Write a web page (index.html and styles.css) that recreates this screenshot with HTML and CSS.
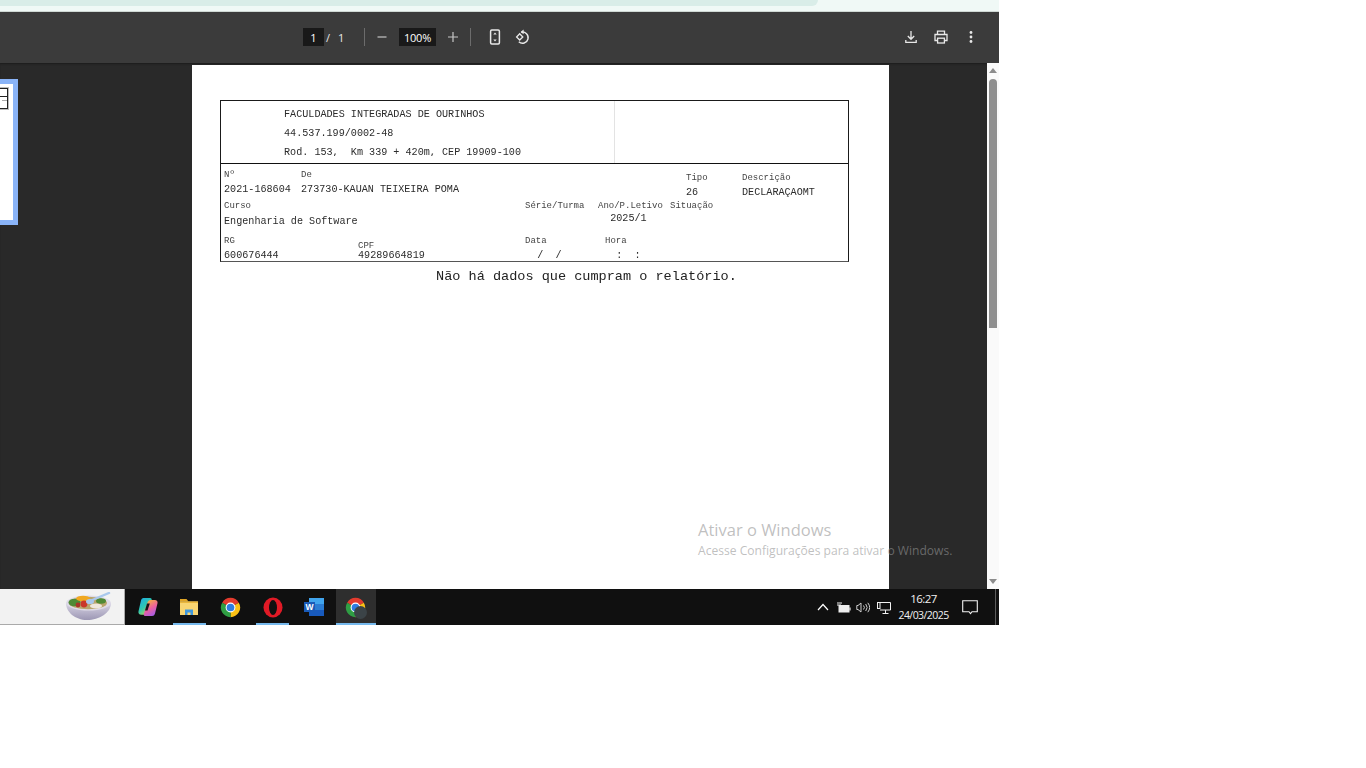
FILE: index.html
```html
<!DOCTYPE html>
<html lang="pt-BR">
<head>
  <meta charset="UTF-8" />
  <title>Relatório</title>
  <link rel="stylesheet" href="styles.css">
</head>
<body>
  <svg class="defs" width="0" height="0">
    <symbol id="chrome" viewBox="0 0 24 24">
      <path d="M12 12L2.47 6.5A11 11 0 0 1 21.53 6.5Z" fill="#e33b2e"/>
      <path d="M12 12L21.53 6.5A11 11 0 0 1 12 23Z" fill="#fbc116"/>
      <path d="M12 12L12 23A11 11 0 0 1 2.47 6.5Z" fill="#2f9e44"/>
      <circle cx="12" cy="12" r="5.6" fill="#fff"/>
      <circle cx="12" cy="12" r="4.4" fill="#2f7de1"/>
    </symbol>
  </svg>

  <div class="screen">
    <div class="top-strip"><div class="top-pill"></div></div>

    <div class="toolbar">
      <div class="page-box">1</div>
      <span class="slash">/</span>
      <span class="total">1</span>
      <span class="divider first"></span>
      <svg class="tool minus" width="12" height="12" viewBox="0 0 12 12"><path d="M1.5 6h9" stroke="#c7c7c7" stroke-width="1.2"/></svg>
      <div class="zoom-box">100%</div>
      <svg class="tool plus" width="12" height="12" viewBox="0 0 12 12"><path d="M1 6h10M6 1v10" stroke="#c7c7c7" stroke-width="1.2"/></svg>
      <span class="divider second"></span>
      <svg class="tool fit" width="14" height="16" viewBox="0 0 14 16" fill="none"><rect x="2.6" y="1" width="8.8" height="14" rx="1.2" stroke="#e8e8e8" stroke-width="1.5"/><path d="M7 3.6l1.7 2H5.3zM7 12.4l1.7-2H5.3z" fill="#e8e8e8"/></svg>
      <svg class="tool rotate" width="16" height="16" viewBox="0 0 16 16" fill="none"><path d="M6.2 3.2a5.6 5.6 0 1 1-2.4 9.6" stroke="#e8e8e8" stroke-width="1.4"/><path d="M8.6 0.6v4.6L5.6 3z" fill="#e8e8e8"/><rect x="2.5" y="5.7" width="4.4" height="4.4" transform="rotate(45 4.7 7.9)" stroke="#e8e8e8" stroke-width="1.3"/></svg>
      <div class="tools-right">
        <svg width="14" height="14" viewBox="0 0 14 14" fill="none"><path d="M7 1v8M3.8 6L7 9.3 10.2 6M1.8 10v2.3h10.400V10" stroke="#e8e8e8" stroke-width="1.3"/></svg>
        <svg width="14" height="14" viewBox="0 0 14 14" fill="none"><path d="M3.5 4V1.2h7V4M3.5 10.5H1V4.5h12v6h-2.5" stroke="#e8e8e8" stroke-width="1.3"/><rect x="3.6" y="8.2" width="6.8" height="4.8" stroke="#e8e8e8" stroke-width="1.3"/></svg>
        <svg width="14" height="14" viewBox="0 0 14 14"><circle cx="7" cy="2.5" r="1.4" fill="#e8e8e8"/><circle cx="7" cy="7" r="1.4" fill="#e8e8e8"/><circle cx="7" cy="11.5" r="1.4" fill="#e8e8e8"/></svg>
      </div>
    </div>

    <div class="viewer">
      <aside class="sidebar">
        <div class="thumb">
          <div class="thumb-table"><div class="thumb-head"></div><div class="thumb-tick"></div></div>
        </div>
      </aside>

      <main class="page">
        <div class="report">
          <div class="report-head">
            <div class="head-left">
              <p>FACULDADES INTEGRADAS DE OURINHOS</p>
              <p>44.537.199/0002-48</p>
              <p>Rod. 153,  Km 339 + 420m, CEP 19909-100</p>
            </div>
            <div class="head-right"></div>
          </div>
          <div class="report-body">
            <span class="lbl c1 r1">Nº</span>
            <span class="lbl c2 r1">De</span>
            <span class="lbl c7 r1 drop3">Tipo</span>
            <span class="lbl c8 r1 drop3">Descrição</span>

            <span class="val c1 r2">2021-168604</span>
            <span class="val c2 r2">273730-KAUAN TEIXEIRA POMA</span>
            <span class="val c7 r2 drop3">26</span>
            <span class="val c8 r2 drop3">DECLARAÇAOMT</span>

            <span class="lbl c1 r3">Curso</span>
            <span class="lbl c4 r3">Série/Turma</span>
            <span class="lbl c5 r3">Ano/P.Letivo</span>
            <span class="lbl c6 r3">Situação</span>

            <span class="val c1 r4">Engenharia de Software</span>
            <span class="val c5 r4 rise3">  2025/1</span>

            <span class="lbl c1 r5">RG</span>
            <span class="lbl c3 r5 drop5">CPF</span>
            <span class="lbl c4 r5">Data</span>
            <span class="lbl c5 r5 indent">Hora</span>

            <span class="val c1 r6">600676444</span>
            <span class="val c3 r6">49289664819</span>
            <span class="val c4 r6">  /  /</span>
            <span class="val c5 r6">   :  :</span>
          </div>
        </div>
        <p class="no-data">Não há dados que cumpram o relatório.</p>
      </main>

      <div class="gutter"></div>

      <div class="scrollbar">
        <span class="arrow up"></span>
        <span class="scroll-thumb"></span>
        <span class="arrow down"></span>
      </div>
    </div>

    <div class="taskbar">
      <div class="search-box">
        <svg width="50" height="30" viewBox="0 0 50 30">
          <defs>
            <linearGradient id="bowl" x1="0" y1="0" x2="0" y2="1"><stop offset="0" stop-color="#d8d4e4"/><stop offset="1" stop-color="#9c97b4"/></linearGradient>
          </defs>
          <path d="M1 11c0 9 9 17 21 17s24-7 24-17z" fill="url(#bowl)"/>
          <ellipse cx="23.5" cy="11" rx="22.5" ry="7.5" fill="#dedbe8"/>
          <ellipse cx="23" cy="11" rx="19" ry="6.2" fill="#b9a56c"/>
          <ellipse cx="9.5" cy="10.5" rx="6" ry="3.8" fill="#4f8a35"/>
          <ellipse cx="18" cy="6.5" rx="7" ry="2.8" fill="#f0a820"/>
          <circle cx="19" cy="12" r="3.4" fill="#c9382b"/>
          <circle cx="13" cy="13" r="2.4" fill="#a8362a"/>
          <ellipse cx="36" cy="9" rx="5" ry="2.8" fill="#4f8a35"/>
          <ellipse cx="31" cy="14" rx="6" ry="2.6" fill="#efe7dc"/>
          <path d="M25 9L44 1" stroke="#a9c8ec" stroke-width="2.4" stroke-linecap="round"/>
          <ellipse cx="25" cy="9.5" rx="4" ry="2.6" fill="#a9c8ec"/>
        </svg>
      </div>

      <div class="task-icons">
        <div class="task-item">
          <svg width="20" height="20" viewBox="0 0 20 20">
            <defs>
              <linearGradient id="cop1" x1="0" y1="0" x2=".7" y2="1"><stop offset="0" stop-color="#1aa8ea"/><stop offset=".55" stop-color="#2fc7b0"/><stop offset="1" stop-color="#c8d84e"/></linearGradient>
              <linearGradient id="cop2" x1=".3" y1="0" x2=".8" y2="1"><stop offset="0" stop-color="#f2b53a"/><stop offset=".5" stop-color="#ec5f9e"/><stop offset="1" stop-color="#9a5cf0"/></linearGradient>
            </defs>
            <path d="M5.5 1h6.5c1.5 0 2 1 1.6 2.4L10 15.5c-.5 1.5-1.5 2.2-3 2.2H3.2C1.2 17.7 0 16 .5 14.2L3 3.5C3.4 2 4.2 1 5.5 1z" fill="url(#cop1)"/>
            <path d="M12.5 3h4.3c2 0 3.2 1.5 2.7 3.3L17 16.5c-.4 1.7-1.5 2.5-3 2.5H7c-1.2 0-1.5-1-1.100-2.200L9.500 5.500C10 4 11 3 12.500 3z" fill="url(#cop2)"/>
            <path d="M9 6.500h2.800L9.500 13.500H7z" fill="#181218"/>
          </svg>
        </div>
        <div class="task-item open">
          <svg width="20" height="18" viewBox="0 0 20 18">
            <path d="M1 1h6.500l2 2.500H1z" fill="#e0a526"/>
            <rect x="1" y="3.500" width="18" height="13.500" fill="#f8d572"/>
            <rect x="1" y="3.500" width="18" height="1.500" fill="#e9b63c"/>
            <path d="M6 17v-5.500h8V17h-2.500v-2.500h-3V17z" fill="#3f97dc"/>
          </svg>
        </div>
        <div class="task-item">
          <svg width="21" height="21"><use href="#chrome"/></svg>
        </div>
        <div class="task-item open">
          <svg width="20" height="21" viewBox="0 0 20 21">
            <ellipse cx="10" cy="10.500" rx="9.500" ry="10" fill="#e11a26"/>
            <ellipse cx="10" cy="10.500" rx="4" ry="7.600" fill="#101010"/>
          </svg>
        </div>
        <div class="task-item">
          <svg width="21" height="20" viewBox="0 0 21 20">
            <rect x="5" y="1" width="15" height="6" fill="#41a5ee"/>
            <rect x="5" y="7" width="15" height="6" fill="#2b7cd3"/>
            <rect x="5" y="13" width="15" height="6" fill="#185abd"/>
            <rect x="0" y="5" width="11" height="10" fill="#1a5bb8"/>
            <text x="5.500" y="13" class="word-w" text-anchor="middle">W</text>
          </svg>
        </div>
        <div class="task-item open active">
          <svg width="21" height="21"><use href="#chrome"/></svg>
          <span class="avatar"></span>
        </div>
      </div>

      <div class="tray">
        <svg class="chev" width="12" height="8" viewBox="0 0 12 8" fill="none"><path d="M1 7l5-5.500L11 7" stroke="#fff" stroke-width="1.200"/></svg>
        <svg class="batt" width="15" height="11" viewBox="0 0 15 11" fill="none"><path d="M1 1h5M1 3h4" stroke="#eee" stroke-width="1.200"/><rect x="3" y="3.500" width="10" height="6.500" fill="#eee" stroke="#eee"/><path d="M14 5.500v3" stroke="#eee" stroke-width="1.200"/></svg>
        <svg class="sound" width="14" height="11" viewBox="0 0 14 11" fill="none"><path d="M5 1L2 3.500H.8v4H2L5 10z" stroke="#cfcfcf"/><path d="M7.500 3.500a3 3 0 0 1 0 4M9.700 2a5.500 5.500 0 0 1 0 7M11.800.8a7.500 7.500 0 0 1 0 9.400" stroke="#cfcfcf"/></svg>
        <svg class="net" width="14" height="13" viewBox="0 0 14 13" fill="none"><path d="M3 1.500H13.500V9H3M8.500 9v3M5.500 12.500h6" stroke="#f2f2f2"/><rect x="0.500" y="1.500" width="2.500" height="6" stroke="#f2f2f2"/></svg>
        <div class="clock">
          <span class="time">16:27</span>
          <span class="date">24/03/2025</span>
        </div>
        <svg class="notify" width="16" height="15" viewBox="0 0 16 15" fill="none"><path d="M.7.700h14.600v11H10l-1.500 2-1.500-2H.7z" stroke="#f2f2f2" stroke-width="1.100"/></svg>
        <span class="show-desktop"></span>
      </div>
    </div>

    <div class="watermark">
      <p class="wm-title">Ativar o Windows</p>
      <p class="wm-sub">Acesse Configurações para ativar o Windows.</p>
    </div>
  </div>
</body>
</html>
```

FILE: styles.css
```css
html, body {
  margin: 0;
  height: 100%;
  background: #fff;
  overflow: hidden;
}

p { margin: 0; }

.defs { display: block; height: 0; }

.screen {
  position: relative;
  width: 999px;
  height: 625px;
  display: flex;
  flex-direction: column;
  overflow: hidden;
  font-family: "Open Sans", "Noto Sans", sans-serif;
}

/* faixa clara do navegador */
.top-strip {
  height: 11px;
  background: #f0f9f6;
  border-bottom: 1px solid #cfd8d4;
}
.top-pill {
  width: 818px;
  height: 6px;
  background: #d9ede8;
  border-bottom-right-radius: 6px;
}

/* barra do visualizador de pdf */
.toolbar {
  height: 51px;
  flex: none;
  box-sizing: border-box;
  padding: 0 0 1px 303px;
  display: flex;
  align-items: center;
  background: #3b3b3b;
  color: #e8e8e8;
  font-size: 11px;
}
.page-box, .zoom-box {
  height: 18px;
  line-height: 19px;
  background: #191919;
  color: #fff;
  text-align: center;
}
.page-box { width: 21px; }
.zoom-box { width: 37px; margin-left: 11px; letter-spacing: -.2px; }
.slash { margin-left: 2px; width: 6px; }
.total { margin-left: 6px; width: 7px; }
.divider {
  width: 1px;
  height: 18px;
  background: #6c6c6c;
}
.divider.first { margin-left: 19px; }
.divider.second { margin-left: 11px; }
.minus { margin-left: 11px; }
.plus { margin-left: 11px; }
.fit { margin-left: 17px; }
.rotate { margin-left: 13px; }
.tools-right {
  margin-left: auto;
  margin-right: 21px;
  display: flex;
  align-items: center;
  gap: 16px;
}

.viewer {
  flex: 1;
  display: flex;
  min-height: 0;
  background: #292929;
  box-shadow: inset 0 2px 2px -1px #1c1c1c;
}

.sidebar {
  width: 192px;
  flex: none;
  overflow: hidden;
}
.thumb {
  width: 100px;
  height: 136px;
  margin: 16px 0 0 -92px;
  border: 5px solid #8ab4f8;
  background: #fff;
  box-sizing: content-box;
}
.thumb-table {
  width: 90px;
  height: 21px;
  margin: 4px 0 0 5px;
  border: 1px solid #222;
  box-sizing: border-box;
  box-shadow: 0 0 0 1px #bbb;
}
.thumb-head {
  height: 7px;
  border-bottom: 1px solid #222;
}
.thumb-tick {
  height: 1px;
  width: 5px;
  margin: 3px 0 0 83px;
  background: #aaa;
}

/* folha do relatorio */
.page {
  width: 697px;
  flex: none;
  margin-top: 2px;
  box-sizing: border-box;
  padding: 35px 0 0 28px;
  background: #fff;
  font-family: "Liberation Mono", monospace;
  color: #2b2b2b;
}
.report {
  width: 629px;
  height: 162px;
  box-sizing: border-box;
  border: 1px solid #1a1a1a;
  border-bottom-color: #555;
  filter: blur(.45px);
}
.report-head {
  height: 63px;
  display: flex;
  border-bottom: 1px solid #111;
  box-sizing: border-box;
}
.head-left {
  width: 393px;
  height: 55px;
  padding: 4px 0 0 63px;
  box-sizing: border-box;
  overflow: hidden;
  font-size: 10.15px;
  line-height: 19px;
}
.head-left p { white-space: pre; }
.head-right {
  flex: 1;
  border-left: 1px solid #e3e3e3;
}

.report-body {
  display: grid;
  grid-template-columns: 77px 57px 167px 73px 72px 16px 56px 1fr;
  grid-template-rows: 15px 16px 16px 19px 15px 12px;
  padding: 4px 0 0 3px;
  box-sizing: border-box;
}
.report-body span {
  white-space: pre;
  line-height: 14px;
  height: 14px;
}
.lbl { font-size: 9px; color: #444; }
.val { font-size: 10.15px; }

.c1 { grid-column: 1; }
.c2 { grid-column: 2; }
.c3 { grid-column: 3; }
.c4 { grid-column: 4; }
.c5 { grid-column: 5; }
.c6 { grid-column: 6 / span 2; }
.c7 { grid-column: 7; }
.c8 { grid-column: 8; }
.r1 { grid-row: 1; }
.r2 { grid-row: 2; }
.r3 { grid-row: 3; }
.r4 { grid-row: 4; }
.r5 { grid-row: 5; }
.r6 { grid-row: 6; }
.drop3 { margin-top: 3px; }
.drop5 { margin-top: 5px; }
.rise3 { margin-top: -3px; }
.indent { margin-left: 7px; }

.no-data {
  margin: 7px 0 0 216px;
  font-size: 13.55px;
  line-height: 16px;
  filter: blur(.25px);
  color: #222;
}

.gutter { flex: 1; }

.scrollbar {
  width: 12px;
  flex: none;
  display: flex;
  flex-direction: column;
  align-items: center;
  background: #fafafa;
  padding-top: 5px;
  box-sizing: border-box;
}
.arrow {
  width: 0;
  height: 0;
  border-left: 4px solid transparent;
  border-right: 4px solid transparent;
}
.arrow.up { border-bottom: 5px solid #8c8c8c; }
.arrow.down { border-top: 5px solid #8c8c8c; margin-top: auto; margin-bottom: 5px; }
.scroll-thumb {
  width: 8px;
  height: 249px;
  margin-top: 6px;
  border-radius: 4px 4px 0 0;
  background: #8f8f8f;
}

/* barra de tarefas */
.taskbar {
  height: 36px;
  flex: none;
  display: flex;
  background: #101010;
  color: #fff;
}
.search-box {
  width: 125px;
  flex: none;
  box-sizing: border-box;
  display: flex;
  justify-content: flex-end;
  align-items: center;
  padding-right: 9px;
  background: #f2f2f2;
  border-right: 1px solid #aaa;
  border-bottom: 1px solid #aaa;
}
.task-icons {
  display: flex;
  margin-left: 2px;
}
.task-item {
  position: relative;
  width: 41.6px;
  display: flex;
  align-items: center;
  justify-content: center;
  box-sizing: border-box;
}
.task-item.open::after {
  content: "";
  position: absolute;
  left: 4px;
  right: 4px;
  bottom: 0;
  height: 2px;
  background: #76b9ed;
}
.task-item.active {
  width: 40px;
  margin: 0 .8px;
  background: #2e2e2e;
}
.task-item.active::after { left: 0; right: 0; }
.avatar {
  position: absolute;
  left: 18px;
  top: 17px;
  width: 13px;
  height: 13px;
  border-radius: 50%;
  background: #3b4347;
}
.word-w {
  font-family: "Liberation Sans", sans-serif;
  font-size: 8.5px;
  font-weight: 700;
  fill: #fff;
}

.tray {
  flex: 1;
  display: flex;
  align-items: center;
  padding-left: 440px;
}
.batt { margin-left: 7px; }
.sound { margin-left: 5px; }
.net { margin-left: 7px; }
.clock {
  width: 60px;
  margin-left: 3px;
  display: flex;
  flex-direction: column;
  align-items: center;
  font-size: 10.5px;
  line-height: 16px;
  letter-spacing: -.55px;
  color: #f0f0f0;
}
.time { font-size: 11.5px; }
.notify { margin-left: 8px; }
.show-desktop {
  width: 1px;
  height: 36px;
  margin-left: auto;
  margin-right: 3px;
  background: #5c5c5c;
}

/* marca d'agua sobre o conteudo */
.watermark {
  position: absolute;
  left: 698px;
  top: 519px;
  color: rgba(150, 150, 150, .6);
  white-space: nowrap;
}
.wm-title { font-size: 16.5px; line-height: 22px; }
.wm-sub { font-size: 12.1px; line-height: 20px; }
```
